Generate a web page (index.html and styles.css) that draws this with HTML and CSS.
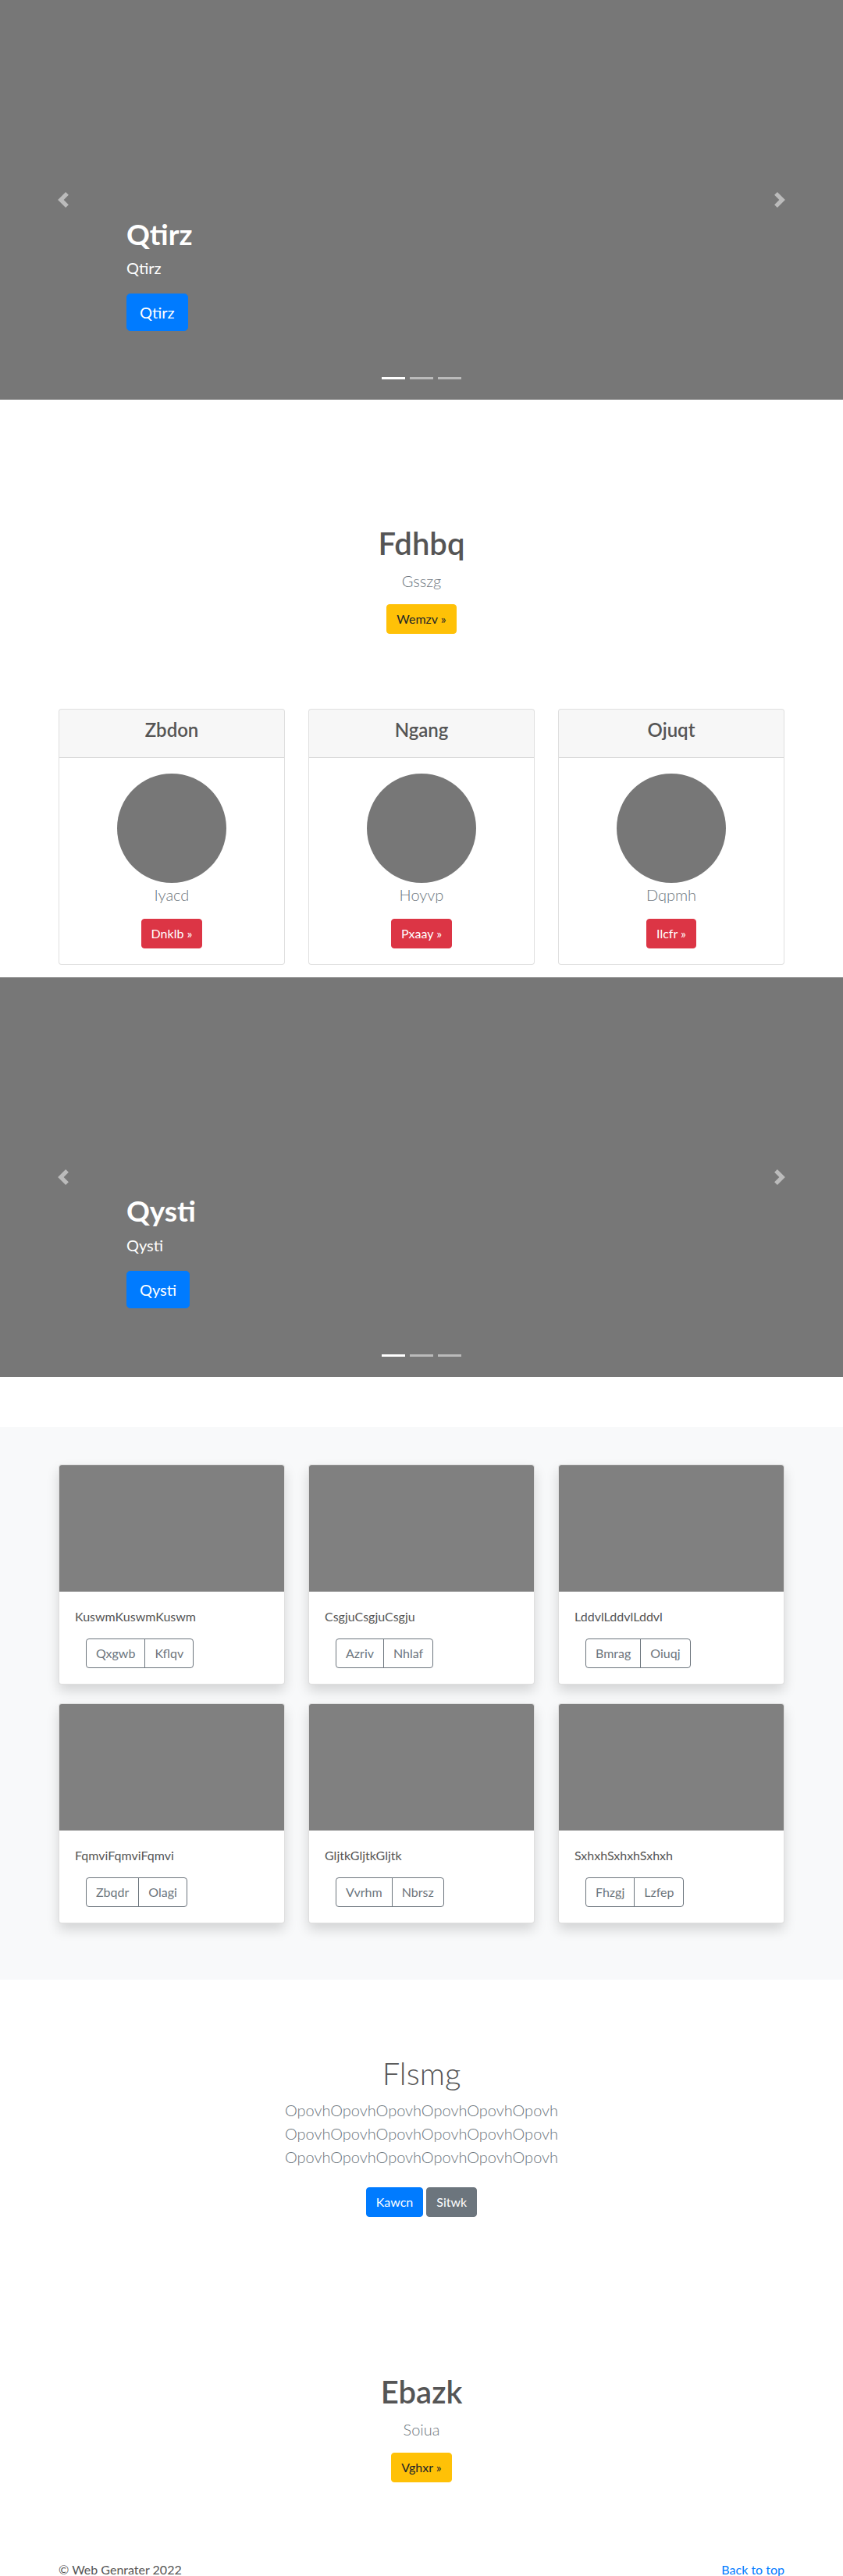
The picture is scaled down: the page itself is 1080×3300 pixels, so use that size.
FILE: index.html
```html
<!DOCTYPE html>
<html lang="en">
<head>
<meta charset="utf-8">
<title>Web Genrater</title>
<link rel="stylesheet" href="styles.css">
</head>
<body>
<main>
  <div class="carousel">
    <a class="carousel-control prev" href="#"><svg viewBox="0 0 8 8" fill="#fff"><path d="M5.25 0l-4 4 4 4 1.5-1.5L4.25 4l2.5-2.5L5.25 0z"/></svg></a>
    <a class="carousel-control next" href="#"><svg viewBox="0 0 8 8" fill="#fff"><path d="M2.75 0l-1.5 1.5L3.75 4l-2.5 2.5L2.75 8l4-4-4-4z"/></svg></a>
    <ol class="indicators"><li class="active"></li><li></li><li></li></ol>
    <div class="caption">
      <h1>Qtirz</h1>
      <p>Qtirz</p>
      <a class="btn btn-lg btn-primary" href="#">Qtirz</a>
    </div>
  </div>

  <section class="intro">
    <h1>Fdhbq</h1>
    <p class="lead">Gsszg</p>
    <a class="btn btn-warning" href="#">Wemzv &raquo;</a>
  </section>

  <div class="pricing">
    <div class="price-card">
      <div class="head"><h4>Zbdon</h4></div>
      <div class="body">
        <div class="avatar"></div>
        <p class="name">Iyacd</p>
        <a class="btn btn-danger" href="#">Dnklb &raquo;</a>
      </div>
    </div>
    <div class="price-card">
      <div class="head"><h4>Ngang</h4></div>
      <div class="body">
        <div class="avatar"></div>
        <p class="name">Hoyvp</p>
        <a class="btn btn-danger" href="#">Pxaay &raquo;</a>
      </div>
    </div>
    <div class="price-card">
      <div class="head"><h4>Ojuqt</h4></div>
      <div class="body">
        <div class="avatar"></div>
        <p class="name">Dqpmh</p>
        <a class="btn btn-danger" href="#">Ilcfr &raquo;</a>
      </div>
    </div>
  </div>

  <div class="carousel">
    <a class="carousel-control prev" href="#"><svg viewBox="0 0 8 8" fill="#fff"><path d="M5.25 0l-4 4 4 4 1.5-1.5L4.25 4l2.5-2.5L5.25 0z"/></svg></a>
    <a class="carousel-control next" href="#"><svg viewBox="0 0 8 8" fill="#fff"><path d="M2.75 0l-1.5 1.5L3.75 4l-2.5 2.5L2.75 8l4-4-4-4z"/></svg></a>
    <ol class="indicators"><li class="active"></li><li></li><li></li></ol>
    <div class="caption">
      <h1>Qysti</h1>
      <p>Qysti</p>
      <a class="btn btn-lg btn-primary" href="#">Qysti</a>
    </div>
  </div>

  <section class="album">
    <div class="album-grid">
      <div class="album-card">
        <div class="thumb"></div>
        <div class="album-body">
          <p>KuswmKuswmKuswm</p>
          <div class="btn-group"><a class="btn btn-outline" href="#">Qxgwb</a><a class="btn btn-outline" href="#">Kflqv</a></div>
        </div>
      </div>
      <div class="album-card">
        <div class="thumb"></div>
        <div class="album-body">
          <p>CsgjuCsgjuCsgju</p>
          <div class="btn-group"><a class="btn btn-outline" href="#">Azriv</a><a class="btn btn-outline" href="#">Nhlaf</a></div>
        </div>
      </div>
      <div class="album-card">
        <div class="thumb"></div>
        <div class="album-body">
          <p>LddvlLddvlLddvl</p>
          <div class="btn-group"><a class="btn btn-outline" href="#">Bmrag</a><a class="btn btn-outline" href="#">Oiuqj</a></div>
        </div>
      </div>
      <div class="album-card">
        <div class="thumb"></div>
        <div class="album-body">
          <p>FqmviFqmviFqmvi</p>
          <div class="btn-group"><a class="btn btn-outline" href="#">Zbqdr</a><a class="btn btn-outline" href="#">Olagi</a></div>
        </div>
      </div>
      <div class="album-card">
        <div class="thumb"></div>
        <div class="album-body">
          <p>GljtkGljtkGljtk</p>
          <div class="btn-group"><a class="btn btn-outline" href="#">Vvrhm</a><a class="btn btn-outline" href="#">Nbrsz</a></div>
        </div>
      </div>
      <div class="album-card">
        <div class="thumb"></div>
        <div class="album-body">
          <p>SxhxhSxhxhSxhxh</p>
          <div class="btn-group"><a class="btn btn-outline" href="#">Fhzgj</a><a class="btn btn-outline" href="#">Lzfep</a></div>
        </div>
      </div>
    </div>
  </section>

  <section class="jumbo">
    <h1>Flsmg</h1>
    <p class="lead">OpovhOpovhOpovhOpovhOpovhOpovh<br>OpovhOpovhOpovhOpovhOpovhOpovh<br>OpovhOpovhOpovhOpovhOpovhOpovh</p>
    <div class="btn-row">
      <a class="btn btn-primary" href="#">Kawcn</a>
      <a class="btn btn-secondary" href="#">Sitwk</a>
    </div>
  </section>

  <section class="feature">
    <h1>Ebazk</h1>
    <p class="lead">Soiua</p>
    <a class="btn btn-warning" href="#">Vghxr &raquo;</a>
  </section>

  <footer class="footer">
    <p>&copy; Web Genrater 2022</p>
    <p><a href="#">Back to top</a></p>
  </footer>
</main>
</body>
</html>
```
FILE: styles.css
```css
* { box-sizing: border-box; }

body {
  margin: 0;
  font-family: Lato, "Open Sans", "Liberation Sans", sans-serif;
  font-size: 16px;
  line-height: 1.5;
  color: #555;
  background: #fff;
}

h1, h4, p { margin: 0; }
a { text-decoration: none; color: #007bff; }

/* carousel */
.carousel {
  position: relative;
  height: 512px;
  background: #777;
  overflow: hidden;
}
.carousel-control {
  position: absolute;
  top: 0;
  bottom: 0;
  width: 15%;
  display: flex;
  align-items: center;
  justify-content: center;
  opacity: .5;
}
.carousel-control.prev { left: 0; }
.carousel-control.next { right: 0; }
.carousel-control svg { width: 20px; height: 20px; display: block; }

.indicators {
  position: absolute;
  left: 0;
  right: 0;
  bottom: 26px;
  display: flex;
  justify-content: center;
  gap: 6px;
  margin: 0;
  padding: 0;
  list-style: none;
}
.indicators li { width: 30px; height: 3px; background: #fff; opacity: .5; }
.indicators li.active { opacity: 1; }

.caption {
  position: absolute;
  left: 15%;
  right: 15%;
  bottom: 88px;
  color: #fff;
  text-align: left;
}
.caption h1 { font-size: 37px; font-weight: 700; line-height: 1.2; margin-bottom: 6px; }
.caption p { font-size: 20px; line-height: 1.5; margin-bottom: 18px; }

/* buttons */
.btn {
  display: inline-block;
  padding: 6px 12px;
  font-size: 16px;
  line-height: 1.5;
  font-weight: 400;
  border: 1px solid transparent;
  border-radius: 4px;
  vertical-align: middle;
}
.btn-lg { padding: 8px 16px; font-size: 20px; border-radius: 4.8px; }
.btn-primary { background: #007bff; border-color: #007bff; color: #fff; }
.btn-secondary { background: #6c757d; border-color: #6c757d; color: #fff; }
.btn-warning { background: #ffc107; border-color: #ffc107; color: #212529; }
.btn-danger { background: #dc3545; border-color: #dc3545; color: #fff; }
.btn-outline { background: transparent; border-color: #6c757d; color: #6c757d; }

.lead { font-size: 20px; font-weight: 300; line-height: 1.5; color: #6c757d; }

/* intro */
.intro { padding-top: 160px; text-align: center; }
.intro h1, .feature h1 { font-size: 40px; font-weight: 600; line-height: 1.2; margin-bottom: 9px; color: #555; }
.intro .lead, .feature .lead { margin-bottom: 15px; }

/* pricing cards */
.pricing {
  width: 930px;
  margin: 96px auto 16px;
  display: flex;
  gap: 30px;
}
.price-card {
  flex: 1;
  background: #fff;
  border: 1px solid rgba(0,0,0,.125);
  border-radius: 4px;
  text-align: center;
  overflow: hidden;
}
.price-card .head {
  background: rgba(0,0,0,.03);
  border-bottom: 1px solid rgba(0,0,0,.125);
  padding: 12px 20px;
}
.price-card h4 { font-size: 24px; font-weight: 600; line-height: 1.2; margin: 0 0 8px; color: #555; }
.price-card .body { padding: 20px; }
.avatar { width: 140px; height: 140px; border-radius: 50%; background: #777; margin: 0 auto; }
.name { font-size: 20px; font-weight: 300; line-height: 1.5; color: #6c757d; margin-bottom: 16px; }

/* album */
.album { margin-top: 64px; background: #f8f9fa; padding: 48px 0 72px; }
.album-grid {
  width: 930px;
  margin: 0 auto;
  display: grid;
  grid-template-columns: repeat(3, 1fr);
  gap: 24px 30px;
}
.album-card {
  background: #fff;
  border: 1px solid rgba(0,0,0,.125);
  border-radius: 4px;
  box-shadow: 0 8px 16px rgba(0,0,0,.15);
  overflow: hidden;
}
.thumb { height: 162px; background: #808080; }
.album-body { padding: 20px; }
.album-body p { margin-bottom: 16px; color: #555; }
.btn-group { display: inline-flex; margin-left: 14px; }
.btn-group .btn:first-child { border-radius: 4px 0 0 4px; }
.btn-group .btn + .btn { margin-left: -1px; border-radius: 0 4px 4px 0; }

/* jumbotron */
.jumbo { padding-top: 96px; text-align: center; }
.jumbo h1 { font-size: 40px; font-weight: 300; line-height: 1.2; margin-bottom: 8px; color: #555; }
.jumbo .lead { margin-bottom: 24px; }
.btn-row { display: flex; justify-content: center; gap: 4px; }

/* feature */
.feature { padding-top: 200px; text-align: center; }

/* footer */
.footer {
  width: 930px;
  margin: 100px auto 0;
  display: flex;
  justify-content: space-between;
  padding-bottom: 16px;
  color: #555;
}
```
